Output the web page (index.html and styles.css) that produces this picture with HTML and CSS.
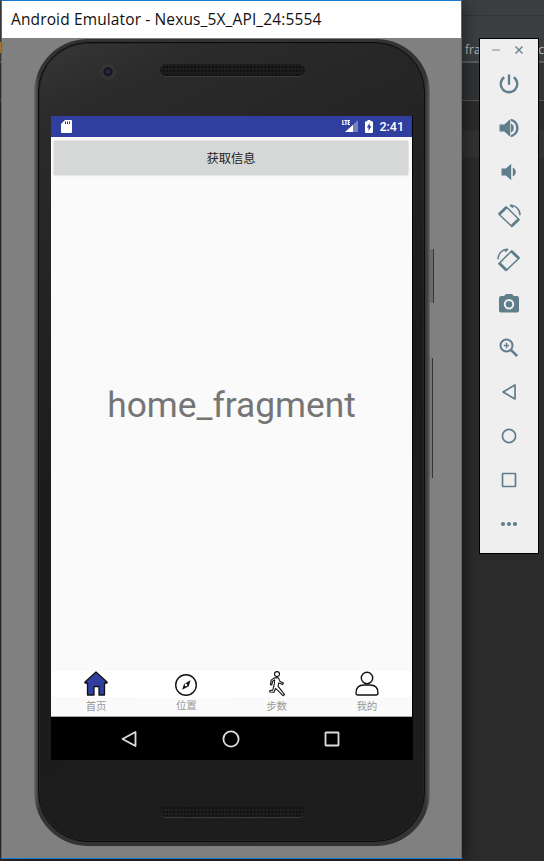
FILE: index.html
```html
<!DOCTYPE html>
<html lang="zh">
<head>
<meta charset="utf-8">
<title>Android Emulator</title>
<link rel="stylesheet" href="styles.css">
</head>
<body>
<div class="desktop">
  <div class="ide">
    <div class="ide-top"></div>
    <div class="ide-menu"></div>
    <div class="ide-tabs"><span>fra</span><span>c</span></div>
    <div class="ide-panel"></div>
    <div class="ide-code"></div>
    <div class="ide-line"></div>
  </div>
  <i class="edge-mark"></i>

  <main class="window">
    <header class="title"><span>Android Emulator - Nexus_5X_API_24:5554</span></header>
    <div class="stage">
      <i class="side power"></i><i class="side volume"></i>
      <div class="phone">
        <div class="face">
          <div class="bezel top"><i class="camera"></i><i class="speaker"></i></div>
          <div class="screen">
            <div class="status">
              <svg class="sd" width="11" height="13" viewBox="0 0 11 13"><path fill="#fff" d="M4 0h6q1 0 1 1v11q0 1-1 1H1q-1 0-1-1V4z"/><path stroke="#303f9f" d="M4.500 1.500v2.500M6.500 1.500v2.500M8.500 1.500v2.500"/></svg>
              <svg class="signal" width="16" height="13" viewBox="0 0 16 13"><path fill="#7881c0" d="M16 0v12H3z"/><path fill="#fff" d="M11 5v7H3z"/><path fill="none" stroke="#fff" stroke-width="1.200" d="M.8 0v4.500h1.700M2.400.5h3M3.900.5V5M8 .5H6.300v4H8M6.300 2.500h1.500"/></svg>
              <svg class="battery" width="8" height="13" viewBox="0 0 8 13"><path fill="#fff" d="M2.500 0h3v1.300H7q1 0 1 1V12q0 1-1 1H1q-1 0-1-1V2.300q0-1 1-1h1.500z"/><path fill="#303f9f" d="M4.700 3 1.700 7.500h1.800v3.500l3-4.700H4.700z"/></svg>
              <span>2:41</span>
            </div>
            <button class="info">获取信息</button>
            <div class="content">home_fragment</div>
            <nav class="tabs">
              <div><span class="ico"><svg width="26" height="26" viewBox="0 0 26 26"><path fill="#303f9f" stroke="#111" stroke-width="1.300" stroke-linejoin="round" d="M13 1 24 11v1h-2.500v12H16v-8.500h-5V24H4.500V12H2v-1z"/></svg></span><b>首页</b></div>
              <div class="up"><span class="ico"><svg width="26" height="26" viewBox="0 0 26 26"><circle cx="13" cy="14" r="10.300" fill="none" stroke="#111" stroke-width="1.400"/><path fill="#111" fill-rule="evenodd" d="m17.500 9.300-1.800 5.900-6.500 3.600L11 13zM13.300 12.700a1.300 1.300 0 1 0 .1 2.500 1.300 1.300 0 0 0-.1-2.500z"/></svg></span><b>位置</b></div>
              <div><span class="ico"><svg width="26" height="26" viewBox="0 0 26 26"><g fill="none" stroke="#111" stroke-width="1.100" stroke-linejoin="round" stroke-linecap="round"><circle cx="13" cy="3.100" r="2.500"/><path d="M10.200 6.900h4.300l1.500 3.500 3.400 1.600-.6 1.400-4-1.500-.8 3.200 2.500 3.300 4 5.200-1.500 1.100-4.500-4.600-3-2.700-1.400 3.800-4.300-.2v-1.500l3-.4 1.500-6.200.3-4-2 1.200-.8 3.800-1.400-.3.800-4.500z"/></g></svg></span><b>步数</b></div>
              <div><span class="ico"><svg width="26" height="26" viewBox="0 0 26 26"><g fill="none" stroke="#111" stroke-width="1.400"><circle cx="13" cy="7" r="5.700"/><path d="M4 24q-2 0-2-2c0-5 3-8 8-8h6c5 0 8 3 8 8q0 2-2 2z"/></g></svg></span><b>我的</b></div>
            </nav>
            <div class="keys">
              <svg width="18" height="18" viewBox="0 0 18 18"><path d="M15.500 2v14L2.500 9z"/></svg>
              <svg width="18" height="18" viewBox="0 0 18 18"><circle cx="9" cy="9" r="7.600"/></svg>
              <svg width="18" height="18" viewBox="0 0 18 18"><rect x="2.500" y="2.500" width="13" height="13" rx=".5"/></svg>
            </div>
          </div>
          <div class="bezel bottom"><i class="speaker"></i></div>
        </div>
      </div>
    </div>
  </main>

  <aside class="tools">
    <div class="controls">
      <svg width="8" height="8" viewBox="0 0 8 8"><path stroke="#9bb0ba" stroke-width="1.500" d="M0 4h8"/></svg>
      <svg width="8" height="8" viewBox="0 0 8 8"><path stroke="#607d8b" stroke-width="1.300" d="m.5.5 7 7m0-7-7 7"/></svg>
    </div>
    <svg viewBox="0 0 24 24"><path class="line heavy" d="M12 2.500v10.300M7.200 5.200a8.300 8.300 0 1 0 9.600 0"/></svg>
    <svg viewBox="0 0 24 24"><path class="fill" d="M2.500 8.500v7h4.800l6 5.500V3l-6 5.500zM14 7.500v9c1.700-.8 2.800-2.400 2.800-4.500S15.700 8.300 14 7.500zm0-4.700v2.200c3 .8 5.100 3.600 5.100 7S17 18.200 14 19v2.200c4.300-.9 7.600-4.700 7.600-9.200S18.300 3.700 14 2.800z"/></svg>
    <svg viewBox="0 0 24 24"><path class="fill" d="M4.500 8.500v7h4.400l5.300 4.700V3.800L8.900 8.500zM15.800 7.500v9c1.700-.8 3-2.400 3-4.500s-1.300-3.700-3-4.500z"/></svg>
    <svg viewBox="0 0 24 24"><g class="rot"><path d="M9.500 3 22 15.500l-7.200 7L1.800 10z"/><path class="thick" d="m2.500 10 7-6.700m5.500 18.500 6.700-6.600"/><path d="M13 1.200c5-.5 10 4 10 10M13 1.200l3 2.500"/></g></svg>
    <svg viewBox="0 0 24 24"><g class="rot" transform="matrix(-1 0 0 1 24 0)"><path d="M9.500 3 22 15.500l-7.200 7L1.800 10z"/><path class="thick" d="m2.500 10 7-6.700m5.500 18.500 6.700-6.600"/><path d="M13 1.200c5-.5 10 4 10 10M13 1.200l3 2.500"/></g></svg>
    <svg viewBox="0 0 24 24"><path class="fill" fill-rule="evenodd" d="M9 2h6l1.900 2H20q2 0 2 2V18.500q0 2-2 2H4q-2 0-2-2V6q0-2 2-2h3.100zM12 7a5.200 5.200 0 1 0 0 10.400A5.200 5.200 0 0 0 12 7z"/><circle class="fill" cx="12" cy="12.200" r="3.200"/></svg>
    <svg viewBox="0 0 24 24"><g class="line"><circle cx="9.500" cy="9.500" r="6" stroke-width="2"/><path d="M9.500 6.800v5.400M6.800 9.500h5.400" stroke-width="1.400"/><path d="m14.200 14.200 6 6" stroke-width="2.600"/></g></svg>
    <svg viewBox="0 0 24 24"><path class="line" d="M18 5v14L6 12z"/></svg>
    <svg viewBox="0 0 24 24"><circle class="line" cx="12" cy="12" r="6.600"/></svg>
    <svg viewBox="0 0 24 24"><rect class="line" x="5.500" y="5.500" width="13" height="13" rx=".5"/></svg>
    <svg viewBox="0 0 24 24"><circle class="fill" cx="6" cy="12" r="2.100"/><circle class="fill" cx="12" cy="12" r="2.100"/><circle class="fill" cx="18" cy="12" r="2.100"/></svg>
  </aside>
</div>
</body>
</html>
```
FILE: styles.css
```css
* { box-sizing: border-box; }
body { margin: 0; background: #2b2b2b; font-family: Roboto, "Noto Sans CJK SC", sans-serif; }
svg { display: block; }
.desktop { position: relative; width: 544px; height: 861px; overflow: hidden; background: #2b2b2b; }

.ide { display: flex; flex-direction: column; }
.ide-top { height: 15px; background: #3c3f41; }
.ide-menu { height: 23px; background: #3c3f41; border-top: 1px solid #323435; }
.ide-tabs { height: 25px; display: flex; justify-content: space-between; padding: 3px 0 0 465px; background: #3c3f41; border-bottom: 2px solid #5a5c5d; color: #bbb; font: 12px/18px "Open Sans", sans-serif; overflow: hidden; }
.ide-panel { height: 38px; background: #313335; border-bottom: 1px solid #555; }
.ide-code { height: 29px; background: #2b2b2b; }
.ide-line { height: 28px; background: #323232; }
.edge-mark { position: absolute; left: 0; top: 42px; width: 1px; height: 11px; background: #c98928; }

.window { position: absolute; left: 1px; top: 0; width: 461px; height: 859px; display: flex; flex-direction: column; border: 1px solid #1979ca; background: #808080; box-shadow: 3px 2px 14px rgba(0,0,0,.45); }
.title { height: 37px; flex: none; background: #fff; color: #111; padding-left: 9px; font: 15.5px/37px "Open Sans", sans-serif; letter-spacing: .13px; white-space: nowrap; }
.stage { position: relative; flex: 1; padding: 1px 0 0 32px; }
.side { position: absolute; left: 427px; width: 5px; background: #6c6a6b; border-right: 1px solid #353535; }
.power { top: 211px; height: 54px; }
.volume { top: 320px; height: 120px; width: 4px; background: #777; }
.phone { position: relative; width: 396px; height: 807px; padding: 3px 5px 4px 4px; border-radius: 54px; background: linear-gradient(90deg, #707070 0, #505050 2px, #333 5px, #343234 391px, #484648 394px, #6a6a6a 396px); }
.face { height: 800px; border-radius: 50px; border: 1px solid #0c0c0c; box-shadow: inset 0 0 0 1px #252525; background: linear-gradient(155deg, #373738 0, #2b2b2c 70px, #242424 220px, #1b1b1b 420px, #1d1d1e 100%); }
.bezel { display: flex; }
.top { height: 73px; padding: 21px 0 0 61px; gap: 44px; }
.bottom { padding: 45px 0 0 121px; }
.camera { width: 16px; height: 16px; border-radius: 50%; background: radial-gradient(circle at 50% 48%, #2a2340 0 2px, #16151a 3px 4px, #343435 5px 8px); }
.speaker { width: 145px; height: 13px; border-radius: 7px; border-bottom: 1px solid #3b3b3b; background: radial-gradient(circle, #0a0a0a .5px, transparent 1.2px) 2px 1px / 3.5px 4px, #1c1c1c; }
.screen { width: 361px; height: 644px; margin-left: 12px; display: flex; flex-direction: column; background: #fafafa; box-shadow: 1px 0 #000; }
.status { height: 21px; flex: none; display: flex; align-items: center; padding: 0 8px 0 10px; background: #303f9f; color: #fff; font-size: 12.5px; font-weight: 500; }
.signal { margin-left: auto; margin-right: 7px; }
.battery { margin-right: 6px; }
.info { height: 34px; flex: none; margin: 4px 4px 0 3px; padding: 0; border: 0; border-radius: 2px; background: #d6d7d7; color: #222; box-shadow: 0 0 2px #aaa; font: 12.3px/33px "Noto Sans CJK SC", sans-serif; }
.content { flex: 1; display: flex; align-items: center; justify-content: center; padding-bottom: 37px; color: #757575; font-size: 35.3px; }
.tabs { height: 46px; flex: none; display: flex; border-bottom: 1px solid #a5aca8; }
.tabs div { flex: 1; display: flex; flex-direction: column; align-items: center; }
.ico { width: 100%; height: 26px; display: flex; justify-content: center; background: #fff; }
.tabs b { height: 19px; color: #999; font: 10.5px/18px "Noto Sans CJK SC", sans-serif; }
.tabs .up .ico { height: 27px; }
.tabs .up b { margin-top: -2px; }
.keys { height: 43px; flex: none; display: flex; justify-content: center; align-items: center; gap: 83.5px; padding-right: 2px; background: #000; }
.keys svg { fill: none; stroke: #ddd; stroke-width: 1.8; stroke-linejoin: round; }

.tools { position: absolute; left: 479px; top: 38px; width: 60px; height: 516px; display: flex; flex-direction: column; align-items: center; gap: 20px; border: 1px solid #000; background: #efefef; }
.tools > svg { width: 24px; height: 24px; flex: none; overflow: visible; }
.controls { height: 13px; display: flex; gap: 15px; align-items: flex-end; padding: 7px 4px 0 0; }
.controls svg { flex: none; position: relative; top: 2px; }
.fill { fill: #607d8b; }
.line { fill: none; stroke: #607d8b; stroke-width: 1.7; stroke-linejoin: round; }
.heavy { stroke-width: 2.3; }
.rot { fill: none; stroke: #607d8b; stroke-width: 1.5; }
.rot .thick { stroke-width: 2.8; }
```
